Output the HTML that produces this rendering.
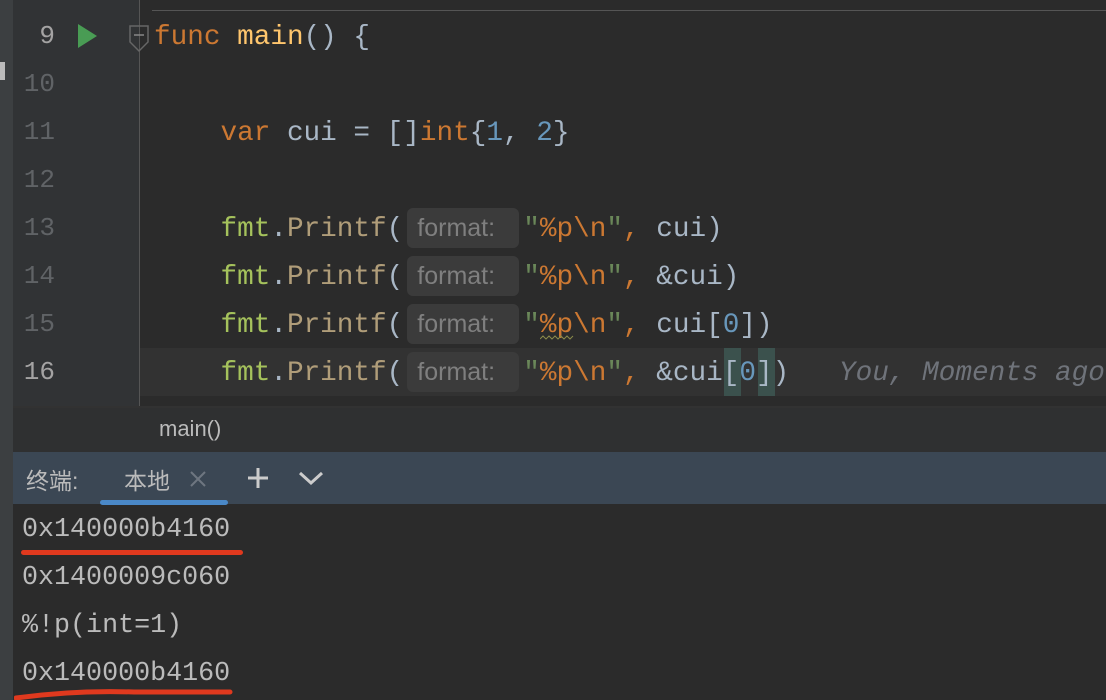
<!DOCTYPE html>
<html><head><meta charset="utf-8"><style>
*{margin:0;padding:0;box-sizing:border-box}
body{width:1106px;height:700px;overflow:hidden;background:#2b2b2b;position:relative;font-family:"Liberation Mono",monospace}
.ab{position:absolute}
.code{position:absolute;left:154px;font-size:27.7px;line-height:48px;height:48px;white-space:pre;color:#a9b7c6}
.ln{position:absolute;left:7px;width:48px;text-align:right;font-size:26px;line-height:48px;color:#606366}
.k{color:#cc7832}.f{color:#ffc66d}.g{color:#a5c25c}.m{color:#b09d79}.n{color:#6897bb}.s{color:#6a8759}.e{color:#cc7832}
.hint{display:inline-block;background:#3b3b3b;color:#7f7f7f;font-family:"Liberation Sans",sans-serif;font-size:25px;line-height:40px;height:40px;width:112px;padding-left:10px;border-radius:6px;vertical-align:top;margin:2px 4px 0 4px}
.term{position:absolute;left:22px;font-size:26.7px;line-height:48px;color:#bbbbbb;white-space:pre}
</style></head><body>
<div class="ab" style="left:0;top:0;width:13px;height:700px;background:#3c3f41"></div>
<div class="ab" style="left:0;top:62px;width:5px;height:18px;background:#bbb"></div>
<div class="ab" style="left:13px;top:0;width:127px;height:406px;background:#313335"></div>
<div class="ab" style="left:139px;top:0;width:1px;height:406px;background:#555"></div>
<div class="ab" style="left:152px;top:10px;width:954px;height:1px;background:#555"></div>
<div class="ab" style="left:140px;top:348px;width:966px;height:48px;background:#323232"></div>
<svg class="ab" style="left:78px;top:24px" width="20" height="24"><polygon points="0,0 19,12 0,24" fill="#499c54"/></svg>
<svg class="ab" style="left:128px;top:24px" width="22" height="30"><path d="M2 2H20V18L11 27L2 18Z" fill="none" stroke="#666" stroke-width="1.5"/><path d="M6 11H16" stroke="#888" stroke-width="1.5"/></svg>
<div class="ln" style="top:12px;color:#a4a3a3">9</div>
<div class="ln" style="top:60px">10</div>
<div class="ln" style="top:108px">11</div>
<div class="ln" style="top:156px">12</div>
<div class="ln" style="top:204px">13</div>
<div class="ln" style="top:252px">14</div>
<div class="ln" style="top:300px">15</div>
<div class="ln" style="top:348px;color:#a4a3a3">16</div>
<div class="code" style="top:14px"><span class="k">func</span> <span class="f">main</span>() {</div>
<div class="code" style="top:110px">    <span class="k">var</span> cui = []<span class="k">int</span>{<span class="n">1</span>, <span class="n">2</span>}</div>
<div class="code" style="top:206px">    <span class="g">fmt</span>.<span class="m">Printf</span>(<span class="hint">format:</span><span class="s">"</span><span class="e">%p\n</span><span class="s">"</span><span class="k">,</span> cui)</div>
<div class="code" style="top:254px">    <span class="g">fmt</span>.<span class="m">Printf</span>(<span class="hint">format:</span><span class="s">"</span><span class="e">%p\n</span><span class="s">"</span><span class="k">,</span> &amp;cui)</div>
<div class="code" style="top:302px">    <span class="g">fmt</span>.<span class="m">Printf</span>(<span class="hint">format:</span><span class="s">"</span><span class="e">%p\n</span><span class="s">"</span><span class="k">,</span> cui[<span class="n">0</span>])</div>
<svg class="ab" style="left:540px;top:335px" width="34" height="6"><path d="M0 4L3 1L6 4L9 1L12 4L15 1L18 4L21 1L24 4L27 1L30 4L33 1" fill="none" stroke="#8a8a4a" stroke-width="1"/></svg>
<div class="ab" style="left:724px;top:348px;width:17px;height:48px;background:#3b514d"></div>
<div class="ab" style="left:758px;top:348px;width:17px;height:48px;background:#3b514d"></div>
<div class="code" style="top:350px">    <span class="g">fmt</span>.<span class="m">Printf</span>(<span class="hint">format:</span><span class="s">"</span><span class="e">%p\n</span><span class="s">"</span><span class="k">,</span> &amp;cui[<span class="n">0</span>])   <i style="color:#6f737a">You, Moments ago</i></div>
<div class="ab" style="left:13px;top:406px;width:1093px;height:46px;background:#2f3031;border-top:2px solid #323232"></div>
<div class="ab" style="left:159px;top:416px;font-family:'Liberation Sans',sans-serif;font-size:22px;color:#bbb">main()</div>
<div class="ab" style="left:13px;top:452px;width:1093px;height:52px;background:#3b4754"></div>
<div class="ab" style="left:26px;top:462px;font-family:'Liberation Sans','Noto Sans CJK SC',sans-serif;font-size:23px;color:#bbb">终端:</div>
<div class="ab" style="left:124px;top:462px;font-family:'Liberation Sans','Noto Sans CJK SC',sans-serif;font-size:23px;color:#bbb">本地</div>
<svg class="ab" style="left:190px;top:471px" width="16" height="16"><path d="M1 1L15 15M15 1L1 15" stroke="#6e7680" stroke-width="2"/></svg>
<div class="ab" style="left:100px;top:500px;width:128px;height:5px;border-radius:3px;background:#4a88c7"></div>
<svg class="ab" style="left:247px;top:467px" width="22" height="22"><path d="M11 1V21M1 11H21" stroke="#ccc" stroke-width="3"/></svg>
<svg class="ab" style="left:298px;top:470px" width="26" height="16"><path d="M2 3L13 13L24 3" fill="none" stroke="#ccc" stroke-width="3"/></svg>
<div class="term" style="top:506px">0x140000b4160</div>
<div class="term" style="top:554px">0x1400009c060</div>
<div class="term" style="top:602px">%!p(int=1)</div>
<div class="term" style="top:650px">0x140000b4160</div>
<div class="ab" style="left:21px;top:550px;width:222px;height:5px;border-radius:3px;background:#e0391e"></div>
<svg class="ab" style="left:14px;top:688px" width="220" height="12"><path d="M2 10Q60 2 120 4L216 4" fill="none" stroke="#e0391e" stroke-width="5" stroke-linecap="round"/></svg>
</body></html>
